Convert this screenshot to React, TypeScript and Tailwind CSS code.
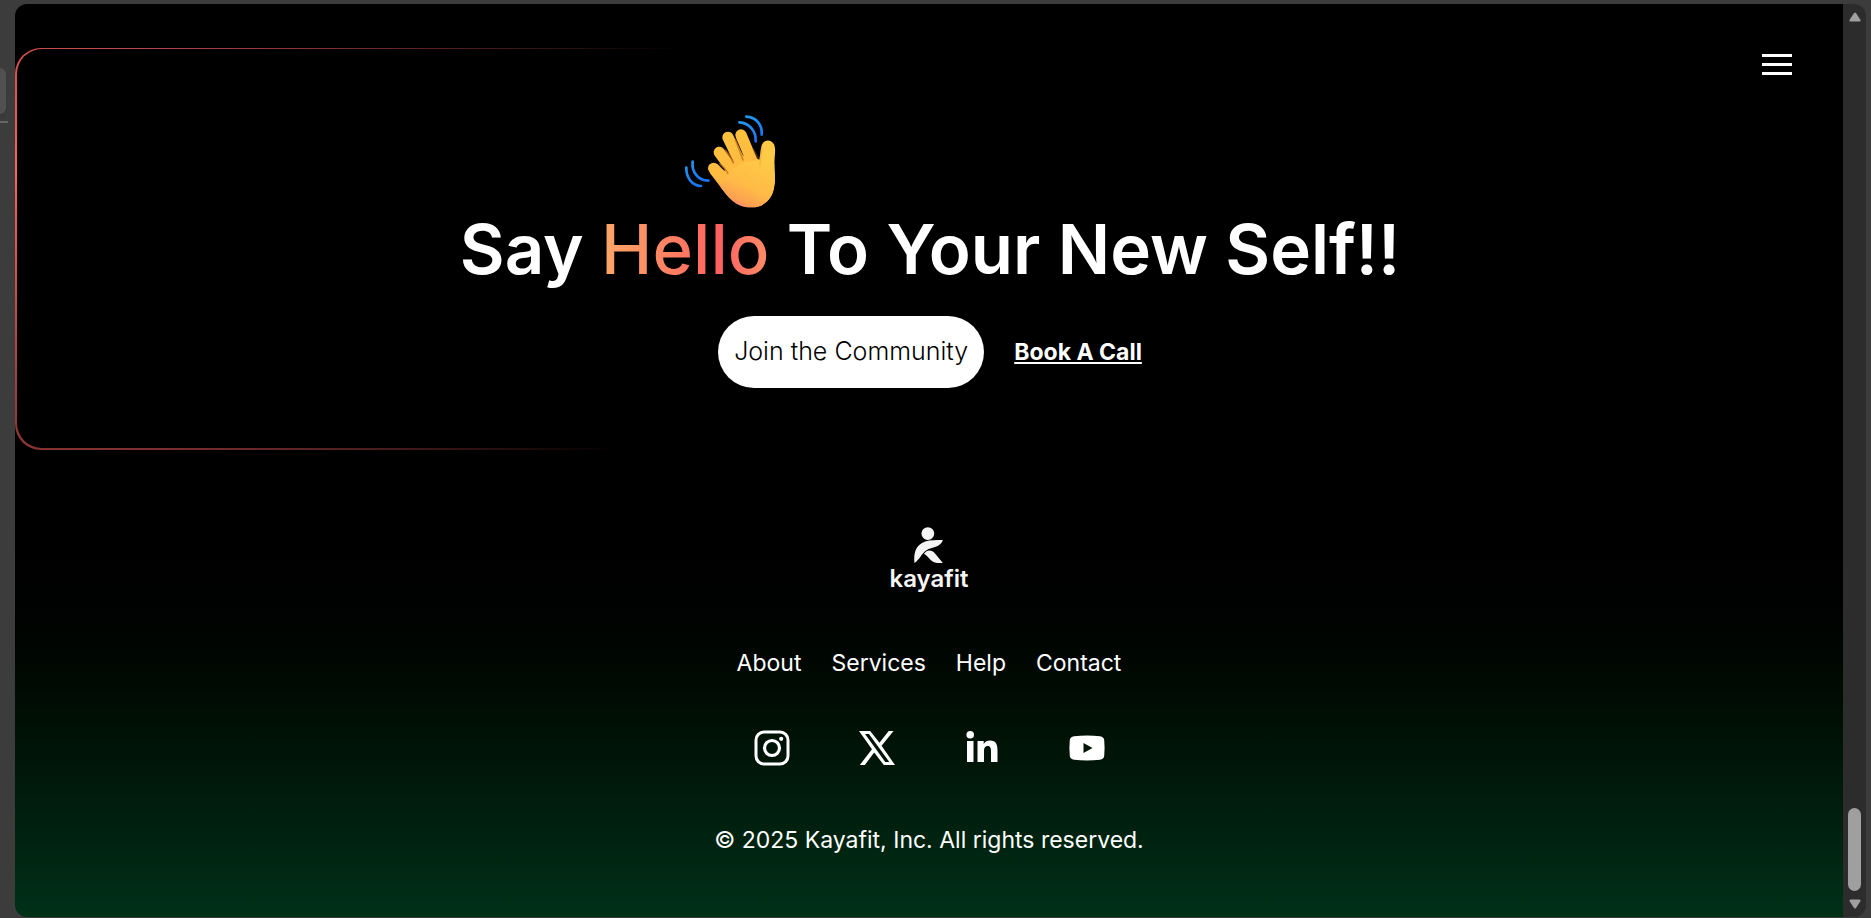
const footerLinks = ["About", "Services", "Help", "Contact"];

function WavingHand() {
  return (
    <svg viewBox="72 44 276 279" className="ml-56 h-[93px] w-[92px]" role="img" aria-label="Waving hand">
      <defs>
        <linearGradient id="finger" gradientUnits="userSpaceOnUse" x1="180" y1="110" x2="240" y2="230">
          <stop offset="0" stopColor="#ffc23c" />
          <stop offset="1" stopColor="#fdb942" />
        </linearGradient>
        <linearGradient id="palm" gradientUnits="userSpaceOnUse" x1="290" y1="170" x2="222" y2="322">
          <stop offset="0" stopColor="#ffca45" />
          <stop offset="0.55" stopColor="#ffbb47" />
          <stop offset="0.85" stopColor="#fc9f52" />
          <stop offset="1" stopColor="#f0748a" />
        </linearGradient>
        <linearGradient id="wave" x1="0" y1="0" x2="0" y2="1">
          <stop offset="0" stopColor="#2196f0" />
          <stop offset="1" stopColor="#1a73f5" />
        </linearGradient>
      </defs>
      <path
        d="M149 217L181 259C200 285 225 322 275 321C318 320 340 290 343 255C348 225 340 215 345 160C346 148 345 139 342 132C333 115 308 117 304 139C301 151 301 164 298 178L262 160L225 180L200 210Z"
        fill="url(#palm)"
      />
      <g stroke="url(#finger)" strokeWidth="34" strokeLinecap="round" fill="none">
        <path d="M161 204L212 255" />
        <path d="M178 156L225 220" />
        <path d="M204 111L242 190" />
        <path d="M243 104L277 185" />
      </g>
      <g fill="none" stroke="#c8701c" strokeWidth="5" strokeLinecap="round" opacity="0.75">
        <path d="M180 190Q198 206 206 222" />
        <path d="M196 150Q213 168 220 188" />
        <path d="M226 118Q239 150 249 179" />
        <path d="M279 146L294 173" opacity="0.5" />
      </g>
      <path
        d="M203 224C214 206 236 193 254 186C272 180 286 183 298 181L343 190C342 215 348 232 343 255C340 290 318 320 275 321C225 322 205 288 181 259Z"
        fill="url(#palm)"
      />
      <path d="M306 142Q301 168 300 195" fill="none" stroke="#e9982d" strokeWidth="5" opacity="0.4" />
      <g fill="none" stroke="url(#wave)" strokeWidth="8" strokeLinecap="round">
        <path d="M238 66C267 68 289 91 287 123" />
        <path d="M259 49C289 50 308 75 305 103" />
        <path d="M98 184C94 216 115 240 145 241" />
        <path d="M79 202C78 233 97 256 123 257" />
      </g>
    </svg>
  );
}

function Logo() {
  return (
    <a href="#home" className="flex flex-col items-center text-[#f5f5f5]">
      <svg viewBox="130 50 88 110" className="h-9 w-[29px]" fill="currentColor" aria-hidden="true">
        <circle cx="172" cy="70" r="19.5" />
        <path d="M218 90C211 113 184 111 168 121C152 131 147 150 131 160C128 126 136 104 164 94C179 89 199 91 218 90Z" />
        <path d="M160 132C169 120 181 118 192 129L218 160H200C181 159 177 142 160 132Z" />
      </svg>
      <span className="text-2xl font-semibold leading-8">kayafit</span>
    </a>
  );
}

function InstagramIcon() {
  return (
    <svg viewBox="0 0 36 36" className="size-9" fill="none" stroke="currentColor" aria-hidden="true">
      <rect x="2" y="2" width="32" height="32" rx="8" strokeWidth="3" />
      <circle cx="18" cy="18" r="7.5" strokeWidth="3.2" />
      <circle cx="27.2" cy="8.8" r="2.1" fill="currentColor" stroke="none" />
    </svg>
  );
}

function XIcon() {
  return (
    <svg viewBox="0 0 37 36" className="size-9" fill="currentColor" aria-hidden="true">
      <path
        fillRule="evenodd"
        d="M0 .5H11.5L21 12.5L30.5 .5H35.5L23.2 15.8L37 35.5H25.5L15.6 22.5L6 35.5H.8L13.3 19.3ZM6.2 3.5L27 32.5H31.2L10.2 3.5Z"
      />
    </svg>
  );
}

function LinkedInIcon() {
  return (
    <svg viewBox="0 0 36 36" className="size-9" fill="currentColor" aria-hidden="true">
      <circle cx="6.2" cy="4.8" r="3.8" />
      <path d="M3 11H9.5V32H3ZM13.5 11H19.7V13.9C21 11.7 23.3 10.5 26.1 10.5C32 10.5 33.5 14.5 33.5 20.2V32H27V21.5C27 18.5 26.6 16 23.7 16C20.8 16 20 18.5 20 21.3V32H13.5Z" />
    </svg>
  );
}

function YoutubeIcon() {
  return (
    <svg viewBox="0 0 36 36" className="size-9" fill="currentColor" aria-hidden="true">
      <path
        fillRule="evenodd"
        d="M5 6.2Q18 4.8 31 6.2Q34.7 6.7 35.2 10Q36 18 35.2 26Q34.7 29.3 31 29.8Q18 31.2 5 29.8Q1.3 29.3 .8 26Q0 18 .8 10Q1.3 6.7 5 6.2ZM14.5 13V23L23.5 18Z"
      />
    </svg>
  );
}

const socials = [
  { name: "Instagram", icon: <InstagramIcon /> },
  { name: "X", icon: <XIcon /> },
  { name: "LinkedIn", icon: <LinkedInIcon /> },
  { name: "YouTube", icon: <YoutubeIcon /> },
];

function Scrollbar() {
  return (
    <div className="flex w-[23px] flex-col items-center rounded-r-xl bg-[#2c2c2c] pb-2 pt-2" aria-hidden="true">
      <svg viewBox="0 0 12 10" className="h-2.5 w-3" fill="#9f9f9f">
        <path d="M5 1Q6 0 7 1L11.5 8Q12 9.5 10.5 9.5H1.5Q0 9.5 .5 8Z" />
      </svg>
      <div className="mt-auto h-[83px] w-[13px] rounded-full bg-[#9f9f9f]" />
      <svg viewBox="0 0 12 10" className="mt-2 h-2.5 w-3" fill="#9f9f9f">
        <path d="M5 9Q6 10 7 9L11.5 2Q12 .5 10.5 .5H1.5Q0 .5 .5 2Z" />
      </svg>
    </div>
  );
}

function App() {
  return (
    <div className="relative flex min-h-screen bg-[#3c3c3c] pb-px pl-[15px] pr-[5px] pt-1 font-['Inter','Noto_Sans',sans-serif] text-white">
      <div className="absolute left-0 top-[68px] h-[46px] w-1.5 rounded-r-lg bg-[#505050] shadow" />
      <div className="absolute left-0 top-[121px] h-0.5 w-2 bg-[#666666]" />

      <div className="relative flex-1 rounded-l-xl bg-linear-to-b from-black from-52% to-[#003018]">
        <button type="button" aria-label="Open menu" className="absolute right-[51px] top-[50px] flex w-[30px] flex-col gap-1.5">
          <span className="h-[3px] bg-white" />
          <span className="h-[3px] bg-white" />
          <span className="h-[3px] bg-white" />
        </button>

        <main className="pt-11">
          <section className="rounded-[26px] bg-[radial-gradient(680px_600px_at_0_30%,#ff6060,#000)] pb-0.5 pl-0.5 pt-px">
            <div className="flex flex-col items-center rounded-[25px] bg-black pb-[60px] pt-[66px]">
              <div>
                <WavingHand />
                <h1 className="text-[69px] font-semibold leading-[82px]">
                  Say{" "}
                  <span className="bg-linear-to-r from-[#ffa866] via-[#ff6060] via-70% to-[#ff8c66] bg-clip-text font-medium text-transparent">
                    Hello
                  </span>{" "}
                  To Your New Self!!
                </h1>
              </div>
              <div className="mt-[26px] flex items-center gap-[30px]">
                <button type="button" className="h-18 rounded-full bg-white px-4 text-[25px] font-light text-black">
                  Join the Community
                </button>
                <a href="#book" className="text-[23px] font-bold underline decoration-2 underline-offset-2">
                  Book A Call
                </a>
              </div>
            </div>
          </section>
        </main>

        <footer className="flex flex-col items-center pt-[77px]">
          <Logo />
          <nav className="mt-[52px] flex gap-[30px] text-[23px] leading-8">
            {footerLinks.map((link) => (
              <a key={link} href={`#${link.toLowerCase()}`}>
                {link}
              </a>
            ))}
          </nav>
          <div className="mt-[51px] flex gap-[69px]">
            {socials.map((social) => (
              <a key={social.name} href={`#${social.name.toLowerCase()}`} aria-label={social.name}>
                {social.icon}
              </a>
            ))}
          </div>
          <p className="mt-[58px] text-[23px] leading-8">© 2025 Kayafit, Inc. All rights reserved.</p>
        </footer>
      </div>

      <Scrollbar />
    </div>
  );
}

export default App;
